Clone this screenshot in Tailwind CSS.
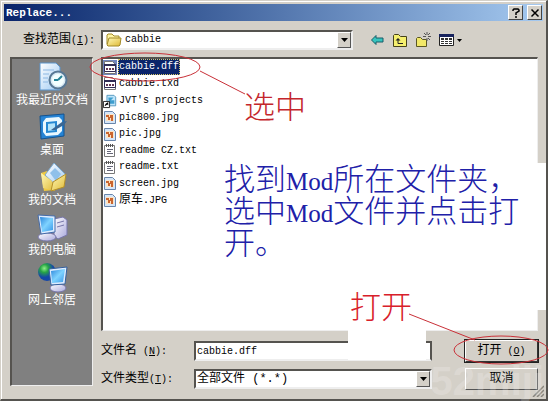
<!DOCTYPE html>
<html lang="zh-CN">
<head>
<meta charset="utf-8">
<title>Replace...</title>
<script src="https://cdn.jsdelivr.net/npm/@tailwindcss/browser@4"></script>
</head>
<body class="min-h-screen bg-white pr-[2px] pb-[2px] font-['Liberation_Mono','Noto_Sans_CJK_SC',monospace] text-[12px] leading-4 text-black">
<svg class="absolute size-0" aria-hidden="true">
  <defs>
    <linearGradient id="scr" x1="0" y1="0" x2="1" y2="1"><stop offset="0" stop-color="#2d86dc"/><stop offset=".5" stop-color="#7fd3ff"/><stop offset="1" stop-color="#3796e8"/></linearGradient>
    <linearGradient id="fold" x1="0" y1="0" x2="1" y2="1"><stop offset="0" stop-color="#fff9b8"/><stop offset="1" stop-color="#dfb935"/></linearGradient>
    <linearGradient id="gray" x1="0" y1="0" x2="1" y2="1"><stop offset="0" stop-color="#fff"/><stop offset="1" stop-color="#a9a8dc"/></linearGradient>
    <linearGradient id="paper" x1="0" y1="0" x2="1" y2="1"><stop offset="0" stop-color="#fff"/><stop offset="1" stop-color="#9dc9f3"/></linearGradient>
    <radialGradient id="globe" cx=".35" cy=".3"><stop offset="0" stop-color="#8ef088"/><stop offset=".45" stop-color="#28a545"/><stop offset="1" stop-color="#1446a8"/></radialGradient>
    <symbol id="dll" viewBox="0 0 14 15"><path d="M1.500 1.500h8l3 3v9h-11z" fill="#fff" stroke="#777"/><path d="M1.500 4.500h11v7h-11z" fill="#fff" stroke="#302c54"/><path d="M1 4h12v2H1z" fill="#302c54"/><path d="M3 8h2v2H3zM6 8h2v2H6zM9 8h2v2H9z" fill="#673853"/></symbol>
    <symbol id="jpg" viewBox="0 0 14 15"><path d="M1.500 1.500h8l3 3v9h-11z" fill="#d5e6f8" stroke="#6886ac"/><path d="M3 4h8v7H3z" fill="#fbe3c4"/><path d="M3 5h3v2h1V5h3v6H8V8H7v2H5V7H3z" fill="#c9652f"/></symbol>
    <symbol id="txt" viewBox="0 0 14 15"><path d="M1.500 2.500h10v11h-10z" fill="#fff" stroke="#777"/><path d="M3.500 1v3M5.500 1v3M7.500 1v3M9.500 1v3" stroke="#555"/><path d="M4 6.500h6M4 8.500h4M4 10.500h6" stroke="#667"/></symbol>
    <symbol id="link" viewBox="0 0 16 16"><path d="M4.500 1.500h8l2 2v10h-10z" fill="#bfe5fa" stroke="#4d92bc"/><path d="M6 4h6l-3 3h4v4H7z" fill="#3d9dce"/><path d="M.500 8.500h7v7h-7z" fill="#fff" stroke="#111"/><path d="M2 14c0-3 2-3 2-3H3l3-2v4l-1-1z" fill="#000"/></symbol>
  </defs>
</svg>
<main class="relative flex min-h-[401px] flex-col border-t border-r-2 border-b-2 border-l border-t-[#d4d0c8] border-r-[#55534f] border-b-[#55534f] border-l-[#d4d0c8] bg-[#d4d0c8] p-[3px] shadow-[inset_1px_1px_#fff]">
  <header class="flex h-[17px] shrink-0 items-center bg-linear-to-r from-[#0a246a] to-[#a6caf0] pr-px pl-[2px]">
    <h1 class="flex-1 text-[11px] font-bold text-white">Replace...</h1>
    <div class="flex gap-1">
      <button aria-label="帮助" class="grid size-[15px] place-items-center border border-t-white border-r-[#444] border-b-[#444] border-l-white bg-[#d4d0c8]"><svg class="size-3" viewBox="0 0 12 12"><path d="M3 4V3l1-1h4l1 1v1L6 6v2M6 9v2" fill="none" stroke="#000" stroke-width="1.500"/></svg></button>
      <button aria-label="关闭" class="grid size-[15px] place-items-center border border-t-white border-r-[#444] border-b-[#444] border-l-white bg-[#d4d0c8]"><svg class="size-3" viewBox="0 0 12 12"><path d="M2.500 2.500l7 7M9.500 2.500l-7 7" stroke="#000" stroke-width="1.500"/></svg></button>
    </div>
  </header>

  <div class="flex items-center pt-[9px] pl-[19px]">
    <label for="place" class="w-[78px]">查找范围<span class="text-[10px]">(<u>I</u>):</span></label>
    <div class="relative w-[252px]">
      <select id="place" class="block h-[20px] w-full appearance-none rounded-none border-2 border-t-[#55534f] border-r-[#eee] border-b-[#eee] border-l-[#55534f] bg-white pl-[22px] text-[10px] leading-4"><option>cabbie</option></select>
      <svg class="pointer-events-none absolute top-[3px] left-[5px] h-[14px] w-[16px]" viewBox="0 0 16 14"><path d="M1 11V2l1-1h4l2 2h5v3" fill="#fff4a3" stroke="#a38a29"/><path d="M1 12l2-7h12l-1 7-1 1H2z" fill="url(#fold)" stroke="#a38a29"/></svg>
      <span class="pointer-events-none absolute top-[2px] right-[2px] grid h-4 w-[14px] place-items-center border border-t-white border-r-[#555] border-b-[#555] border-l-white bg-[#d4d0c8]"><svg class="h-1 w-[7px]" viewBox="0 0 7 4"><path d="M0 0h7L3.500 4z"/></svg></span>
    </div>
    <nav aria-label="工具栏" class="flex items-center gap-[7px] pl-[17px]">
      <button aria-label="后退"><svg class="h-4 w-[15px]" viewBox="0 0 15 16"><path d="M1.500 8L6 3.500V6h7v4H6v2.500z" fill="#36c4bd" stroke="#185d69"/></svg></button>
      <button aria-label="向上一级"><svg class="h-4 w-4" viewBox="0 0 16 16"><path d="M1.500 14.500v-11l1-1h4l2 2h6v10z" fill="#f5ef6e" stroke="#45421b"/><path d="M6 7v4.500h5" fill="none" stroke="#222"/><path d="M3.500 8.500L6 6l2.500 2.500z" fill="#222"/></svg></button>
      <button aria-label="新建文件夹"><svg class="h-4 w-4" viewBox="0 0 16 16"><path d="M1.500 14.500v-8l1-1h3l2 2h4v7z" fill="#f2e868" stroke="#5a5622"/><path d="M12 0v3M12 6v3M8 4.500h3M13 4.500h3M9 1l2 2M13 6l2 2M15 1l-2 2" stroke="#555"/></svg></button>
      <button aria-label="查看" class="flex items-center gap-[2px]"><svg class="h-4 w-[17px]" viewBox="0 0 17 16"><path d="M1.500 2.500h14v11h-14z" fill="#fff" stroke="#222"/><path d="M1 2h15v3H1z" fill="#18235d"/><path d="M3 6h3v2H3zM7 6h3v2H7zM11 6h3v2h-3zM3 9h3v1H3zM7 9h3v1H7zM11 9h3v1h-3zM3 11h3v1H3zM7 11h3v1H7zM11 11h3v1h-3z" fill="#333"/></svg><svg class="h-[3px] w-[5px]" viewBox="0 0 5 3"><path d="M0 0h5L2.500 3z"/></svg></button>
    </nav>
  </div>

  <div class="flex flex-1 gap-2 pt-[7px] pr-[5px] pl-[6px]">
    <nav aria-label="位置" class="mb-[10px] flex w-[83px] shrink-0 flex-col items-center gap-[2px] border-t-2 border-r border-b border-l-2 border-t-[#55534f] border-r-[#eee] border-b-[#eee] border-l-[#55534f] bg-[#808080] pt-[2px] text-white">
      <a href="#" class="flex flex-col items-center"><svg class="size-8" viewBox="0 0 32 32"><path d="M4 2h16l4 4v23H4z" fill="url(#paper)" stroke="#5b95cd"/><path d="M7 9h11M7 13h6M7 17h5M7 21h5" stroke="#8db8e3"/><circle cx="22" cy="19" r="8.500" fill="#d9eaf4" stroke="#587895" stroke-width="2"/><circle cx="22" cy="19" r="6" fill="#f4ffff"/><path d="M22 19l4-4M22 19h-4" stroke="#258398" stroke-width="2"/></svg>我最近的文档</a>
      <a href="#" class="flex flex-col items-center"><svg class="size-8" viewBox="0 0 32 32"><path d="M4 5l24-2v22L5 28z" fill="#2684d5" stroke="#12528f"/><path d="M10 7l13-1 3 3v11l-4 4-12 1-3-4V11z" fill="#e9f8ff"/><path d="M11 12l9-1v9l-9 1z" fill="#b5e4fa" stroke="#2688d2" stroke-width="2"/><path d="M15 19l11-8 5-1-3 4-9 5z" fill="#3a6794"/></svg>桌面</a>
      <a href="#" class="flex flex-col items-center"><svg class="size-8" viewBox="0 0 32 32"><path d="M5 12l6-2 4 4 3 15-10 1z" fill="#efc941"/><path d="M9 14L18 2l12 12-8 12z" fill="url(#paper)" stroke="#7aa9d1"/><path d="M14 12l5-5 6 6-5 7z" fill="#8fc0ea"/><path d="M5 12l11 8 3 10-12-3z" fill="url(#fold)"/><path d="M15 30l2-9 13-8-2 13z" fill="url(#fold)" stroke="#b69028"/></svg>我的文档</a>
      <a href="#" class="flex flex-col items-center"><svg class="size-8" viewBox="0 0 32 32"><path d="M18 8l9-2 4 3v15l-9 4-4-3z" fill="url(#gray)" stroke="#7776aa"/><path d="M21 12l7-2M21 16l7-2" stroke="#77a"/><ellipse cx="11" cy="26" rx="9" ry="4" fill="url(#gray)" stroke="#7776aa"/><path d="M2 4l17 1v16L5 23z" fill="#dcecff" stroke="#446ba9"/><path d="M4 6l13 1v12L6 21z" fill="url(#scr)"/></svg>我的电脑</a>
      <a href="#" class="flex flex-col items-center"><svg class="size-8" viewBox="0 0 32 32"><circle cx="11" cy="11" r="9" fill="url(#globe)"/><ellipse cx="22" cy="27" rx="8" ry="4" fill="url(#gray)" stroke="#7776aa"/><path d="M13 8l18-2-2 17-14 1z" fill="#dcecff" stroke="#345f9d"/><path d="M15 10l14-2-2 13-11 1z" fill="url(#scr)"/></svg>网上邻居</a>
    </nav>

    <div class="flex min-w-0 flex-1 flex-col">
      <section aria-label="文件" class="relative h-[274px] border-t-2 border-r border-b border-l-2 border-t-[#55534f] border-r-[#eee] border-b-[#eee] border-l-[#55534f] bg-white">
        <ul class="flex flex-col text-[10px]">
          <li class="flex h-[16px] items-center gap-px"><svg class="h-[15px] w-[14px] bg-[#7184bd]"><use href="#dll"/></svg><span class="border border-dotted border-[#d8c86a] bg-[#0a246a] leading-[14px] text-white">cabbie.dff</span></li>
          <li class="flex h-[17px] items-center gap-[2px]"><svg class="h-[15px] w-[14px]"><use href="#dll"/></svg>cabbie.txd</li>
          <li class="flex h-[17px] items-center gap-[2px]"><svg class="h-4 w-[14px]"><use href="#link"/></svg>JVT's projects</li>
          <li class="flex h-[17px] items-center gap-[2px]"><svg class="h-[15px] w-[14px]"><use href="#jpg"/></svg>pic800.jpg</li>
          <li class="flex h-[16px] items-center gap-[2px]"><svg class="h-[15px] w-[14px]"><use href="#jpg"/></svg>pic.jpg</li>
          <li class="flex h-[17px] items-center gap-[2px]"><svg class="h-[15px] w-[14px]"><use href="#txt"/></svg>readme CZ.txt</li>
          <li class="flex h-[16px] items-center gap-[2px]"><svg class="h-[15px] w-[14px]"><use href="#txt"/></svg>readme.txt</li>
          <li class="flex h-[17px] items-center gap-[2px]"><svg class="h-[15px] w-[14px]"><use href="#jpg"/></svg>screen.jpg</li>
          <li class="flex h-[16px] items-center gap-[2px]"><svg class="h-[15px] w-[14px]"><use href="#jpg"/></svg><span><span class="text-[12px]">原车</span>.JPG</span></li>
        </ul>
      </section>
      <div class="grid grid-cols-[93px_238px_73px] items-center gap-y-[6px] pt-[9px]">
        <label for="name">文件名<span class="text-[10px]">&nbsp;(<u>N</u>):</span></label>
        <input id="name" value="cabbie.dff" class="h-[20px] w-full border-2 border-t-[#55534f] border-r-[#55534f] border-b-[#eee] border-l-[#55534f] bg-white pl-px text-[10px]">
        <button class="ml-[33px] h-[22px] w-[73px] border border-t-white border-r-[#333] border-b-[#333] border-l-white bg-[#d4d0c8] outline outline-[#222]">打开<span class="text-[10px]"> (<u>O</u>)</span></button>
        <label for="type">文件类型<span class="text-[10px]">(<u>T</u>):</span></label>
        <div class="relative">
          <select id="type" class="block h-[20px] w-full appearance-none rounded-none border-2 border-t-[#55534f] border-r-[#eee] border-b-[#eee] border-l-[#55534f] bg-white pl-px text-[12px] leading-4"><option>全部文件 (*.*)</option></select>
          <span class="pointer-events-none absolute top-[2px] right-[2px] grid h-4 w-[14px] place-items-center border border-t-white border-r-[#555] border-b-[#555] border-l-white bg-[#d4d0c8]"><svg class="h-1 w-[7px]" viewBox="0 0 7 4"><path d="M0 0h7L3.500 4z"/></svg></span>
        </div>
        <button class="ml-[33px] h-[22px] w-[73px] border border-t-white border-r-[#555] border-b-[#555] border-l-white bg-[#d4d0c8]">取消</button>
      </div>
    </div>
  </div>

  <div class="pointer-events-none absolute top-[162px] right-0 h-[147px] w-[12px] bg-white"></div>
  <div class="pointer-events-none absolute top-[328px] left-[347px] h-[31px] w-[78px] bg-white"></div>
  <svg class="pointer-events-none absolute right-[2px] bottom-[2px] size-3" viewBox="0 0 12 12"><path d="M1 12L12 1M5 12l7-7M9 12l3-3" stroke="#88857e" stroke-width="1.500"/></svg>
  <p class="pointer-events-none absolute right-[2px] bottom-[2px] font-['Liberation_Sans',sans-serif] text-[40px] leading-8 font-bold text-white/20">52miji</p>
  <p class="pointer-events-none absolute top-[91px] left-[243px] font-['Liberation_Serif','Noto_Sans_CJK_SC',serif] text-[31px] leading-8 font-light text-[#c4262c]">选中</p>
  <p class="pointer-events-none absolute top-[291px] left-[349px] font-['Liberation_Serif','Noto_Sans_CJK_SC',serif] text-[31px] leading-8 font-light text-[#d8202a]">打开</p>
  <p class="pointer-events-none absolute top-[163px] left-[223px] font-['Liberation_Serif','Noto_Sans_CJK_SC',serif] text-[31px] leading-8 font-light whitespace-nowrap text-[#2020a8]">找到<span class="text-[25px] leading-none">Mod</span>所在文件夹，<br>选中<span class="text-[25px] leading-none">Mod</span>文件并点击打<br>开。</p>
  <svg class="pointer-events-none absolute -top-px -left-px h-[403px] w-[550px]" viewBox="0 0 550 403" fill="none" stroke="#c93038"><ellipse cx="145" cy="67" rx="55" ry="14"/><path d="M200 71L245 94M409 314L475 340"/><ellipse cx="501" cy="350" rx="47" ry="14"/></svg>
</main>
</body>
</html>
